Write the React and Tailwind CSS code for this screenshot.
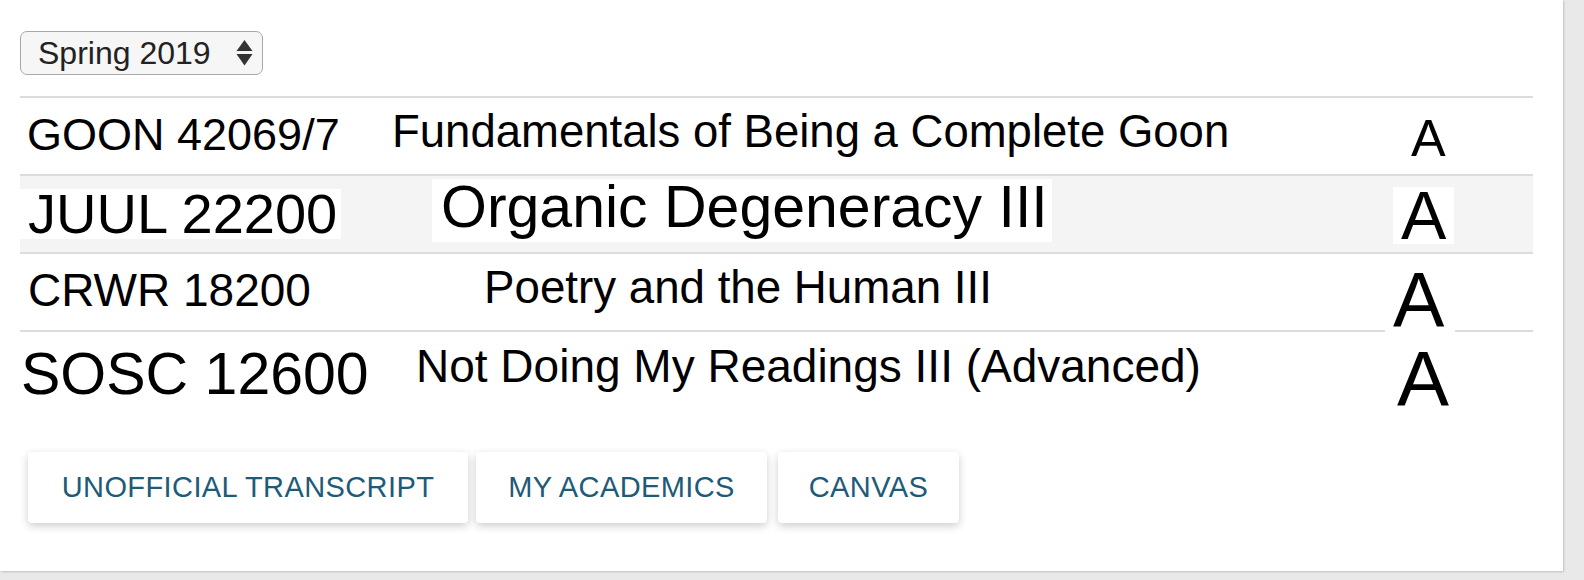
import React from "react";

const font = { fontFamily: '"Liberation Sans", Arial, Helvetica, sans-serif' };

function SelectBox() {
  return (
    <div className="flex items-center w-[243px] h-[44px] rounded-[7px] border-[1.5px] border-[#a8a8a8] bg-[#f6f6f6] pl-[17px] pr-[8px]">
      <span className="text-[32px] leading-none text-[#222] whitespace-nowrap">Spring 2019</span>
      <svg className="ml-auto mr-[1px]" width="17" height="26" viewBox="0 0 17 26">
        <polygon points="8.5,0 16.5,11 0.5,11" fill="#333" />
        <polygon points="0.5,14 16.5,14 8.5,25.5" fill="#333" />
      </svg>
    </div>
  );
}

export default function App() {
  return (
    <div className="w-[1584px] h-[580px] bg-[#e9e9e9] overflow-hidden" style={font}>
      <div className="w-[1563px] h-[571px] bg-white shadow-[1px_1px_2px_rgba(0,0,0,0.18)] pl-[20px] pt-[31px]">
        <SelectBox />

        <div className="mt-[21px] w-[1513px] text-black whitespace-nowrap">
          {/* Row 1 */}
          <div className="flex h-[78px] border-t-2 border-[#dcdcdc]">
            <div className="w-[360px] shrink-0 pl-[7px] pt-[14px]">
              <span className="text-[45px] leading-none">GOON 42069/7</span>
            </div>
            <div className="w-[990px] shrink-0 pl-[12px] pt-[11px]">
              <span className="text-[45.5px] leading-none">Fundamentals of Being a Complete Goon</span>
            </div>
            <div className="flex-1 pl-[41px] pt-[14px]">
              <span className="text-[52px] leading-none">A</span>
            </div>
          </div>

          {/* Row 2 */}
          <div className="flex h-[78px] border-t-2 border-[#dcdcdc] bg-[#f4f4f4]">
            <div className="w-[360px] shrink-0 pt-[13px]">
              <div className="w-[321px] bg-white pl-[8px] text-[56px] leading-[50px]">JUUL 22200</div>
            </div>
            <div className="w-[990px] shrink-0 pl-[52px] pt-[3px]">
              <div className="inline-block bg-white pl-[9px] pr-[4px] pb-[7px] text-[59px] leading-[56px]">Organic Degeneracy III</div>
            </div>
            <div className="flex-1 pl-[23px] pt-[11px]">
              <div className="inline-block bg-white px-[8px] text-[68px] leading-[57px]">A</div>
            </div>
          </div>

          {/* Row 3 */}
          <div className="flex h-[78px] border-t-2 border-[#dcdcdc]">
            <div className="w-[360px] shrink-0 pl-[8px] pt-[13px]">
              <span className="text-[46px] leading-none">CRWR 18200</span>
            </div>
            <div className="w-[990px] shrink-0 pl-[104px] pt-[11px]">
              <span className="text-[45.7px] leading-none">Poetry and the Human III</span>
            </div>
            <div className="flex-1 pl-[15px] pt-[9px]">
              <div className="relative z-10 inline-block bg-white pl-[8px] pr-[11px] text-[77px] leading-[74px]">A</div>
            </div>
          </div>

          {/* Row 4 */}
          <div className="flex h-[78px] border-t-2 border-[#dcdcdc]">
            <div className="w-[360px] shrink-0 pl-[1px] pt-[13px]">
              <span className="text-[59px] leading-none">SOSC 12600</span>
            </div>
            <div className="w-[990px] shrink-0 pl-[36px] pt-[11px]">
              <span className="text-[46px] leading-none">Not Doing My Readings III (Advanced)</span>
            </div>
            <div className="flex-1 pl-[27px] pt-[8px]">
              <span className="text-[78px] leading-none">A</span>
            </div>
          </div>
        </div>

        <div className="flex mt-[44px] ml-[8px] whitespace-nowrap">
          <div className="flex items-center justify-center w-[440px] h-[71px] mr-[8px] rounded-[4px] bg-white shadow-[0_3px_8px_rgba(0,0,0,0.2)] text-[29px] tracking-[0.4px] leading-none text-[#1d5b79]">
            UNOFFICIAL TRANSCRIPT
          </div>
          <div className="flex items-center justify-center w-[291px] h-[71px] mr-[11px] rounded-[4px] bg-white shadow-[0_3px_8px_rgba(0,0,0,0.2)] text-[29px] tracking-[0.4px] leading-none text-[#1d5b79]">
            MY ACADEMICS
          </div>
          <div className="flex items-center justify-center w-[181px] h-[71px] rounded-[4px] bg-white shadow-[0_3px_8px_rgba(0,0,0,0.2)] text-[29px] tracking-[0.4px] leading-none text-[#1d5b79]">
            CANVAS
          </div>
        </div>
      </div>
    </div>
  );
}
